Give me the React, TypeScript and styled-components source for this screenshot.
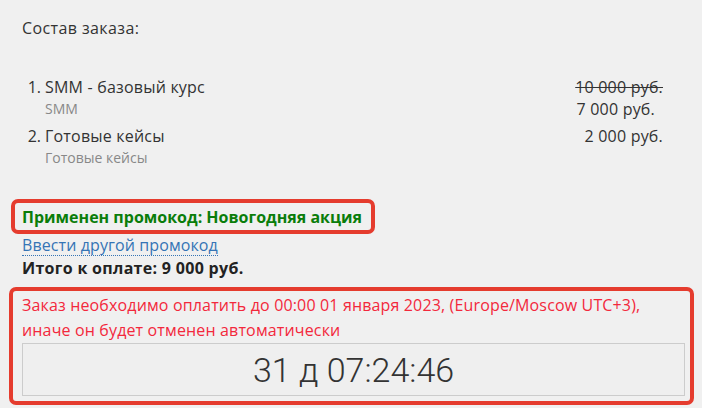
import React from "react";
import styled, { createGlobalStyle } from "styled-components";

const Global = createGlobalStyle`
  html, body { margin: 0; padding: 0; background: #f0f0f0; }
  body { font-family: "Open Sans", "Liberation Sans", sans-serif; color: #333; }
`;

const Page = styled.div`
  width: 702px;
  height: 408px;
  box-sizing: border-box;
  padding: 17px 0 0 22px;
  overflow: hidden;
`;

const Heading = styled.div`
  font-size: 16px;
  line-height: 22px;
  letter-spacing: 0.4px;
  color: #333;
`;

const Items = styled.ol`
  margin: 37px 0 0 0;
  padding: 0;
  list-style: none;
  width: 641px;
`;

const Item = styled.li`
  display: grid;
  grid-template-columns: 23px 1fr auto;
  align-items: start;
  margin-bottom: 5px;
  &:last-child { margin-bottom: 0; }
`;

const Num = styled.span`
  font-size: 16px;
  line-height: 22px;
  text-align: right;
  padding-right: 4px;
`;

const Info = styled.div`
  display: flex;
  flex-direction: column;
`;

const Title = styled.span`
  font-size: 16px;
  line-height: 22px;
  letter-spacing: 0.2px;
`;

const Sub = styled.span`
  font-size: 14px;
  line-height: 22px;
  color: #888;
`;

const Prices = styled.div`
  display: flex;
  flex-direction: column;
  align-items: flex-end;
`;

const Price = styled.span<{ $old?: boolean; $shift?: number }>`
  font-size: 16px;
  line-height: 22px;
  letter-spacing: 0.2px;
  color: #333;
  text-decoration: ${(p) => (p.$old ? "line-through" : "none")};
  padding-right: ${(p) => p.$shift ?? 0}px;
`;

const PromoBox = styled.div`
  display: inline-block;
  margin: 30px 0 0 -11px;
  border: 4px solid #e53c2e;
  border-radius: 7px;
  padding: 3px 9px 2px 7px;
  font-size: 16px;
  line-height: 22px;
  font-weight: 700;
  color: #0a7d0a;
`;

const Link = styled.a`
  display: inline-block;
  font-size: 16px;
  line-height: 20px;
  letter-spacing: 0.1px;
  color: #3574b5;
  text-decoration: none;
  border-bottom: 1px dotted #3574b5;
`;

const Total = styled.div`
  font-size: 16px;
  line-height: 24px;
  letter-spacing: 0.3px;
  font-weight: 700;
  color: #222;
`;

const DeadlineBox = styled.div`
  margin: 7px 0 0 -13px;
  width: 685px;
  box-sizing: border-box;
  border: 4px solid #e53c2e;
  border-radius: 7px;
  padding: 2px 5px 5px 9px;
`;

const Warning = styled.div`
  font-size: 16px;
  line-height: 25px;
  letter-spacing: 0.15px;
  color: #f3283c;
`;

const Timer = styled.div`
  box-sizing: border-box;
  border: 1px solid #ccc;
  background: #efefef;
  height: 53px;
  display: flex;
  align-items: center;
  justify-content: center;
  font-family: Roboto, "Open Sans", sans-serif;
  font-size: 34px;
  color: #333;
  font-weight: 300;
`;

export default function App() {
  return (
    <Page>
      <Global />
      <Heading>Состав заказа:</Heading>
      <Items>
        <Item>
          <Num>1.</Num>
          <Info>
            <Title>SMM - базовый курс</Title>
            <Sub>SMM</Sub>
          </Info>
          <Prices>
            <Price $old>10 000 руб.</Price>
            <Price $shift={8}>7 000 руб.</Price>
          </Prices>
        </Item>
        <Item>
          <Num>2.</Num>
          <Info>
            <Title>Готовые кейсы</Title>
            <Sub>Готовые кейсы</Sub>
          </Info>
          <Prices>
            <Price>2 000 руб.</Price>
          </Prices>
        </Item>
      </Items>
      <PromoBox>Применен промокод: Новогодняя акция</PromoBox>
      <div>
        <Link href="#">Ввести другой промокод</Link>
      </div>
      <Total>Итого к оплате: 9 000 руб.</Total>
      <DeadlineBox>
        <Warning>
          Заказ необходимо оплатить до 00:00 01 января 2023, (Europe/Moscow UTC+3),
          <br />
          иначе он будет отменен автоматически
        </Warning>
        <Timer>31 д 07:24:46</Timer>
      </DeadlineBox>
    </Page>
  );
}
